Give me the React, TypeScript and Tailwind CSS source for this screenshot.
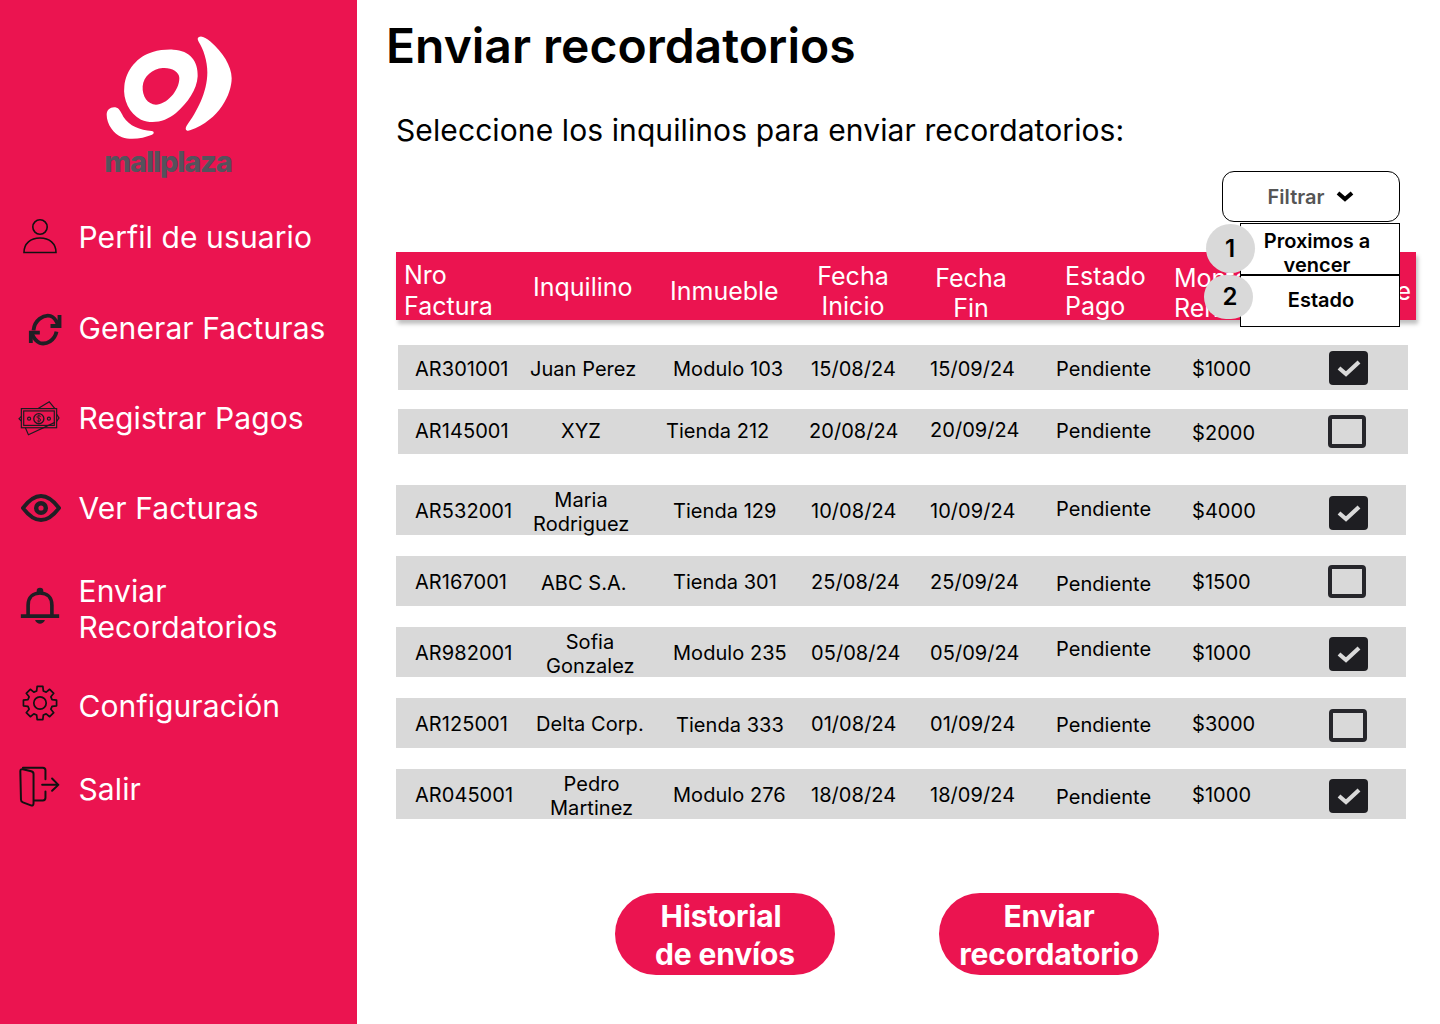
import React from 'react';

const font = { fontFamily: 'Inter, "Liberation Sans", sans-serif' };

const UserIcon = () => (
  <svg width="36" height="36" viewBox="0 0 36 36" fill="none" stroke="#111" strokeWidth="1.6">
    <circle cx="18" cy="9" r="7.2" />
    <path d="M2 34.5c0-9 6.5-14.5 16-14.5s16 5.500 16 14.500z" />
  </svg>
);

const RefreshIcon = () => (
  <svg width="37" height="35" viewBox="80 60 110 105" fill="none" stroke="#1f1f24" strokeWidth="11.500">
    <path d="M99 118C102 88 128 70 150 75C160 78 167 88 172 100" />
    <path d="M177 72V105H150" />
    <path d="M168 122C163 148 138 162 118 156C108 152 100 142 95 130" />
    <path d="M91 156V125H118" />
  </svg>
);

const MoneyIcon = () => (
  <svg width="42" height="36" viewBox="55 330 125 106" fill="none" stroke="#1b1b20" strokeWidth="3.500">
    <path d="M115 355L148 335L165 355M170 372L177 383L170 393M77 412L86 433L165 396M65 378L58 385L65 392" />
    <rect x="65" y="355" width="105" height="57" />
    <rect x="72" y="362" width="91" height="43" />
    <circle cx="117" cy="385" r="15" strokeWidth="4" />
    <circle cx="88" cy="385" r="4.500" />
    <circle cx="147" cy="385" r="4.500" />
    <path d="M123 379c-2-4-12-4-12 1s12 3 12 9c0 5-10 5-12 1M117 373v24" strokeWidth="2.500" />
  </svg>
);

const EyeIcon = () => (
  <svg width="40" height="28" viewBox="0 0 40 28" fill="none" stroke="#1f1f24">
    <path d="M2 14C8 6 14 2 20 2s12 4 18 12c-6 8-12 12-18 12S8 22 2 14z" strokeWidth="3.800" />
    <circle cx="20" cy="14" r="4.800" strokeWidth="4.400" />
  </svg>
);

const BellIcon = () => (
  <svg width="40" height="38" viewBox="60 50 120 115" fill="none" stroke="#1f1f24" strokeWidth="11">
    <path d="M84 135V105C84 80 100 68 120 68S156 80 156 105V135" />
    <circle cx="120" cy="62" r="10" fill="#1f1f24" stroke="none" />
    <path d="M62 138H178" />
    <path d="M105 150H135C132 158 126 161 120 161S108 158 105 150z" fill="#1f1f24" stroke="none" />
  </svg>
);

// 8 square teeth round a ring
const gearPath = Array.from({ length: 8 }, (_, i) => {
  const a = (i * Math.PI) / 4;
  const pt = (r: number, off: number) => {
    const t = a + off;
    return `${(18 + r * Math.sin(t)).toFixed(2)} ${(18 - r * Math.cos(t)).toFixed(2)}`;
  };
  return `${i === 0 ? 'M' : 'L'}${pt(12.5, -0.27)}L${pt(16.8, -0.17)}L${pt(16.8, 0.17)}L${pt(12.5, 0.27)}`;
}).join('') + 'Z';

const GearIcon = () => (
  <svg width="36" height="36" viewBox="0 0 36 36" fill="none" stroke="#111" strokeWidth="1.700" strokeLinejoin="round">
    <path d={gearPath} />
    <circle cx="18" cy="18" r="6.200" />
  </svg>
);

const DoorIcon = () => (
  <svg width="43" height="43" viewBox="55 585 130 130" fill="none" stroke="#111" strokeWidth="6" strokeLinejoin="round" strokeLinecap="round">
    <path d="M70 593H130Q138 593 138 601V628M138 665V684Q138 692 130 692H105" />
    <path d="M62 604Q62 596 70 598L95 604Q102 606 102 612V700Q102 710 94 707L70 698Q64 696 64 690z" />
    <path d="M128 645H177M158 626L177 645L158 663" />
  </svg>
);

const Logo = () => (
  <svg width="137" height="110" viewBox="300 100 411 330" fill="#fff" fillRule="evenodd">
    <path d="M520 150c50 2 75 35 73 80-2 40-30 80-65 110-30 25-70 35-105 20-35-18-55-60-50-100 5-50 40-90 85-103 20-6 42-8 62-7zM488 205c-30 2-58 25-60 55-2 30 15 55 40 55 30 0 70-40 70-80 0-20-25-32-50-30z" />
    <path d="M597 112c8-5 20 2 35 14 35 30 63 72 63 110 0 45-35 125-125 156-12 4-16-4-10-14 30-40 62-100 62-160 0-35-12-70-26-92-4-7-4-12 1-14z" />
    <path d="M320 345c0-15 12-24 26-22 12 2 16 14 24 28 18 28 50 40 85 43 8 1 8 8 1 11-25 10-60 18-90 8-25-10-46-40-46-68z" />
  </svg>
);

type NavEntry = { label: React.ReactNode; icon: React.ReactNode; wrap: string; iconWrap: string };

const nav: NavEntry[] = [
  { label: 'Perfil de usuario', icon: <UserIcon />, wrap: 'h-[60px]', iconWrap: 'ml-[22px] mt-[-2px]' },
  { label: 'Generar Facturas', icon: <RefreshIcon />, wrap: 'h-[60px] mt-[31px]', iconWrap: 'ml-[27px]' },
  { label: 'Registrar Pagos', icon: <MoneyIcon />, wrap: 'h-[60px] mt-[30px]', iconWrap: 'ml-[18px]' },
  { label: 'Ver Facturas', icon: <EyeIcon />, wrap: 'h-[60px] mt-[30px]', iconWrap: 'ml-[21px]' },
  { label: <>Enviar<br />Recordatorios</>, icon: <BellIcon />, wrap: 'h-[72px] mt-[35px]', iconWrap: 'ml-[20px] mt-[-6px]' },
  { label: 'Configuración', icon: <GearIcon />, wrap: 'h-[60px] mt-[31px]', iconWrap: 'ml-[22px] mt-[-6px]' },
  { label: 'Salir', icon: <DoorIcon />, wrap: 'h-[60px] mt-[23px]', iconWrap: 'ml-[18px] mt-[-5px]' },
];

type Cell = { text: React.ReactNode; cls?: string };
type Row = { wrap: string; cells: Cell[]; check: boolean; checkCls: string };

const rows: Row[] = [
  {
    wrap: 'h-[45px] ml-[2px] w-[1010px] pl-[17px] pt-[2px] mt-[25px]', check: true, checkCls: 'ml-[6px] mt-[-2px]',
    cells: [{ text: 'AR301001' }, { text: 'Juan Perez', cls: 'ml-[5px]' }, { text: 'Modulo 103', cls: 'ml-[13px]' }, { text: '15/08/24', cls: 'ml-[6px]' }, { text: '15/09/24', cls: 'ml-[5px]' }, { text: 'Pendiente', cls: 'ml-[6px]' }, { text: '$1000', cls: 'ml-[7px]' }],
  },
  {
    wrap: 'h-[45px] ml-[2px] w-[1010px] pl-[17px] mt-[19px]', check: false, checkCls: 'ml-[5px]',
    cells: [{ text: 'AR145001', cls: 'mt-[-2px]' }, { text: 'XYZ', cls: 'ml-[36px] mt-[-2px]' }, { text: 'Tienda 212', cls: 'ml-[6px] mt-[-2px]' }, { text: '20/08/24', cls: 'ml-[4px] mt-[-2px]' }, { text: '20/09/24', cls: 'ml-[5px] mt-[-3px]' }, { text: 'Pendiente', cls: 'ml-[6px] mt-[-2px]' }, { text: '$2000', cls: 'ml-[7px] mt-[3px]' }],
  },
  {
    wrap: 'h-[50px] grid-rows-[50px] w-[1010px] pl-[19px] mt-[31px]', check: true, checkCls: 'ml-[6px] mt-[5px]',
    cells: [{ text: 'AR532001', cls: 'mt-[2px]' }, { text: <>Maria<br />Rodriguez</>, cls: 'ml-[8px] mt-[4px] text-center leading-[24px] w-[96px]' }, { text: 'Tienda 129', cls: 'ml-[13px] mt-[2px]' }, { text: '10/08/24', cls: 'ml-[6px] mt-[2px]' }, { text: '10/09/24', cls: 'ml-[5px] mt-[2px]' }, { text: 'Pendiente', cls: 'ml-[6px] mt-[-2px]' }, { text: '$4000', cls: 'ml-[7px] mt-[2px]' }],
  },
  {
    wrap: 'h-[50px] w-[1010px] pl-[19px] pt-[2px] mt-[21px]', check: false, checkCls: 'ml-[5px] mt-[-1px]',
    cells: [{ text: 'AR167001' }, { text: 'ABC S.A.', cls: 'ml-[16px] mt-[1px]' }, { text: 'Tienda 301', cls: 'ml-[13px]' }, { text: '25/08/24', cls: 'ml-[6px]' }, { text: '25/09/24', cls: 'ml-[5px]' }, { text: 'Pendiente', cls: 'ml-[6px] mt-[3px]' }, { text: '$1500', cls: 'ml-[7px]' }],
  },
  {
    wrap: 'h-[50px] grid-rows-[50px] w-[1010px] pl-[19px] mt-[21px]', check: true, checkCls: 'ml-[6px] mt-[3px]',
    cells: [{ text: 'AR982001', cls: 'mt-[2px]' }, { text: <>Sofia<br />Gonzalez</>, cls: 'ml-[21px] mt-[4px] text-center leading-[24px] w-[88px]' }, { text: 'Modulo 235', cls: 'ml-[13px] mt-[2px]' }, { text: '05/08/24', cls: 'ml-[6px] mt-[2px]' }, { text: '05/09/24', cls: 'ml-[5px] mt-[2px]' }, { text: 'Pendiente', cls: 'ml-[6px] mt-[-6px]' }, { text: '$1000', cls: 'ml-[7px] mt-[2px]' }],
  },
  {
    wrap: 'h-[50px] w-[1010px] pl-[19px] pt-[2px] mt-[21px]', check: false, checkCls: 'ml-[6px] mt-[3px]',
    cells: [{ text: 'AR125001' }, { text: 'Delta Corp.', cls: 'ml-[11px] mt-[-1px]' }, { text: 'Tienda 333', cls: 'ml-[16px] mt-[1px]' }, { text: '01/08/24', cls: 'ml-[6px]' }, { text: '01/09/24', cls: 'ml-[5px]' }, { text: 'Pendiente', cls: 'ml-[6px] mt-[1px]' }, { text: '$3000', cls: 'ml-[7px]' }],
  },
  {
    wrap: 'h-[50px] grid-rows-[50px] w-[1010px] pl-[19px] mt-[21px]', check: true, checkCls: 'ml-[6px] mt-[3px]',
    cells: [{ text: 'AR045001', cls: 'mt-[2px]' }, { text: <>Pedro<br />Martinez</>, cls: 'ml-[25px] mt-[4px] text-center leading-[24px] w-[83px]' }, { text: 'Modulo 276', cls: 'ml-[13px] mt-[1px]' }, { text: '18/08/24', cls: 'ml-[6px] mt-[2px]' }, { text: '18/09/24', cls: 'ml-[5px] mt-[2px]' }, { text: 'Pendiente', cls: 'ml-[6px] mt-[5px]' }, { text: '$1000', cls: 'ml-[7px] mt-[2px]' }],
  },
];

const Checkbox = ({ checked, cls }: { checked: boolean; cls: string }) =>
  checked ? (
    <div className={`w-[39px] h-[34px] rounded-[4px] bg-[#1e1e22] flex items-center justify-center ${cls}`}>
      <svg width="24" height="18" viewBox="0 0 24 18" fill="none" stroke="#d9d9d9" strokeWidth="4.200">
        <path d="M2 9l7 6L22 3" />
      </svg>
    </div>
  ) : (
    <div className={`w-[38px] h-[33px] rounded-[4px] border-[4px] border-[#26262b] ${cls}`} />
  );

export default function App() {
  return (
    <div className="flex w-[1440px] h-[1024px] bg-white overflow-hidden text-black" style={font}>
      <aside className="w-[357px] shrink-0 bg-[#eb1450] text-white">
        <div className="h-[207px] flex flex-col items-center pt-[33px] pr-[21px]">
          <Logo />
          <div className="text-[#55525c] font-extrabold text-[29px] leading-[36px] tracking-[-1.200px] mt-[1px]">mallplaza</div>
        </div>
        {nav.map((item, i) => (
          <div key={i} className={`flex items-center ${item.wrap}`}>
            <div className="w-[78.500px] shrink-0">
              <div className={`w-fit ${item.iconWrap}`}>{item.icon}</div>
            </div>
            <span className="text-[30px] leading-[36px] tracking-[0.1px]">{item.label}</span>
          </div>
        ))}
      </aside>

      <main className="flex-1 pl-[39px]">
        <h1 className="text-[48px] leading-[58px] font-semibold ml-[-10px] mt-[17px]">Enviar recordatorios</h1>
        <p className="text-[30px] leading-[36px] font-normal tracking-[0.1px] mt-[37px]">Seleccione los inquilinos para enviar recordatorios:</p>

        <div className="flex justify-end w-[1004px] mt-[23px]">
          <div className="relative z-10">
            <button className="w-[178px] h-[51px] rounded-[12px] border border-black bg-white flex items-center justify-center gap-[12px] text-[20px] font-semibold text-[#555]">
              Filtrar
              <svg width="18" height="12" viewBox="0 0 18 12" fill="none" stroke="#000" strokeWidth="4"><path d="M2 2l7 6 7-6" /></svg>
            </button>
            <div className="absolute left-[18px] top-[52px] w-[160px] bg-white">
              <div className="h-[53px] border border-black border-b-2 text-[20px] leading-[24px] font-semibold text-center overflow-hidden pt-[5px] pr-[6px]">Proximos a<br />vencer</div>
              <div className="h-[51px] border border-t-0 border-black text-[20px] leading-[24px] font-semibold text-center pt-[12px] pl-[2px]">Estado</div>
            </div>
            <div className="absolute left-[-16px] top-[53px] w-[49px] h-[49px] rounded-full bg-[#d9d9d9] flex items-center justify-center text-[24px] font-semibold pr-[1px]">1</div>
            <div className="absolute left-[-18px] top-[104px] w-[49px] h-[44px] rounded-full bg-[#d9d9d9] flex items-center justify-center text-[24px] font-semibold pl-[3px]">2</div>
          </div>
        </div>

        <div className="w-[1020px] h-[68px] mt-[30px] bg-[#eb1450] text-white shadow-[2px_4px_4px_rgba(0,0,0,0.25)] text-[25px] leading-[30px] grid grid-cols-[137px_137px_135px_116px_144px_109px_1fr_auto] items-start overflow-hidden">
          <div className="pl-[8px] mt-[8px] leading-[31px]">Nro Factura</div>
          <div className="mt-[20px]">Inquilino</div>
          <div className="mt-[24px]">Inmueble</div>
          <div className="text-center w-[100px] mt-[9px] ml-[-2px]">Fecha Inicio</div>
          <div className="text-center w-[100px] mt-[11px]">Fecha Fin</div>
          <div className="mt-[9px]">Estado Pago</div>
          <div className="mt-[11px]">Monto Renta</div>
          <div className="pr-[5px] mt-[24px]">Seleccione</div>
        </div>

        {rows.map((row, i) => (
          <div key={i} className={`bg-[#d9d9d9] text-[20px] tracking-[0.05px] grid grid-cols-[110px_135px_145px_120px_125px_135px_138px_1fr] items-center ${row.wrap}`}>
            {row.cells.map((cell, j) => (
              <div key={j} className={`whitespace-nowrap ${cell.cls ?? ''}`}>{cell.text}</div>
            ))}
            <Checkbox checked={row.check} cls={row.checkCls} />
          </div>
        ))}

        <div className="flex gap-[104px] ml-[219px] mt-[74px]">
          <button className="w-[220px] h-[82px] pt-[1px] rounded-full bg-[#eb1450] text-white text-[30px] leading-[38px] font-bold tracking-[-0.15px]">
            <span className="block pr-[8px]">Historial</span>
            <span className="block">de envíos</span>
          </button>
          <button className="w-[220px] h-[82px] pt-[1px] rounded-full bg-[#eb1450] text-white text-[30px] leading-[38px] font-bold tracking-[-0.15px]">
            <span className="block">Enviar</span>
            <span className="block">recordatorio</span>
          </button>
        </div>
      </main>
    </div>
  );
}
